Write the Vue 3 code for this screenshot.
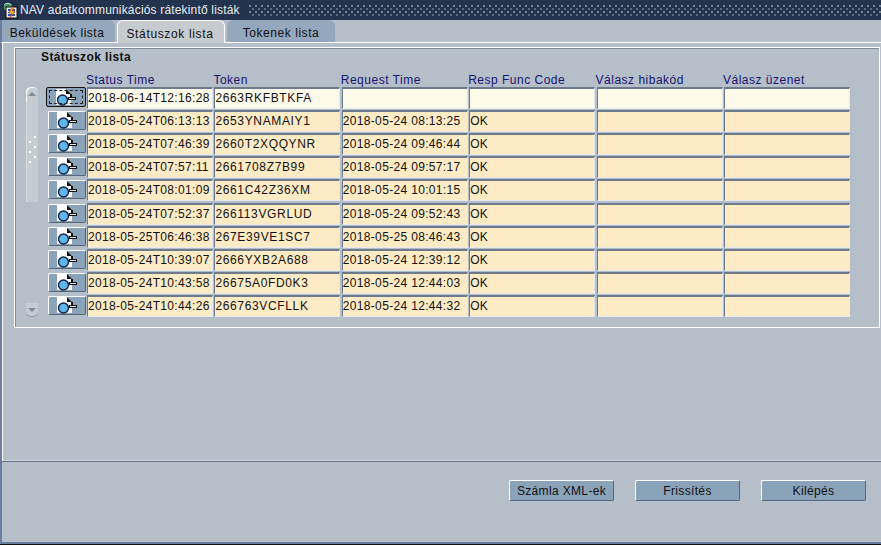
<script setup>
const rows = [
  ['2018-06-14T12:16:28', '2663RKFBTKFA', '', ''],
  ['2018-05-24T06:13:13', '2653YNAMAIY1', '2018-05-24 08:13:25', 'OK'],
  ['2018-05-24T07:46:39', '2660T2XQQYNR', '2018-05-24 09:46:44', 'OK'],
  ['2018-05-24T07:57:11', '2661708Z7B99', '2018-05-24 09:57:17', 'OK'],
  ['2018-05-24T08:01:09', '2661C42Z36XM', '2018-05-24 10:01:15', 'OK'],
  ['2018-05-24T07:52:37', '266113VGRLUD', '2018-05-24 09:52:43', 'OK'],
  ['2018-05-25T06:46:38', '267E39VE1SC7', '2018-05-25 08:46:43', 'OK'],
  ['2018-05-24T10:39:07', '2666YXB2A688', '2018-05-24 12:39:12', 'OK'],
  ['2018-05-24T10:43:58', '26675A0FD0K3', '2018-05-24 12:44:03', 'OK'],
  ['2018-05-24T10:44:26', '266763VCFLLK', '2018-05-24 12:44:32', 'OK'],
]
const heads = ['Status Time', 'Token', 'Request Time', 'Resp Func Code', 'Válasz hibakód', 'Válasz üzenet']
</script>

<template>
  <div class="win">
    <div class="title">
      <svg class="logo" width="16" height="19" viewBox="0 0 16 19">
        <circle cx="6" cy="6" r="5" fill="#3f8f6a" stroke="#12203a" />
        <path d="M2 4c2-2 5-2 7 0M3 8c2 1 4 0 5-2" fill="none" stroke="#d8e8f0" />
        <rect x="4" y="6" width="11" height="11" fill="#f2efe2" stroke="#111" />
        <rect x="6" y="8" width="7" height="2" fill="#2a4fb0" />
        <rect x="6" y="11" width="7" height="1" fill="#2a4fb0" />
        <rect x="6" y="13" width="7" height="2" fill="#2a4fb0" />
        <path d="M10 6l-3 6h3l-2 5 5-7h-3l2-4z" fill="#f0d020" stroke="#c02020" stroke-width="0.6" />
      </svg>
      <span class="title-text">NAV adatkommunikációs rátekintő listák</span>
      <div class="dots"></div>
    </div>
    <div class="tabs">
      <div class="tab first">Beküldések lista</div>
      <div class="tab active">Státuszok lista</div>
      <div class="tab last">Tokenek lista</div>
    </div>
    <div class="panel">
      <div class="frame">
        <div class="frame-title">Státuszok lista</div>
        <div class="heads">
          <span v-for="h in heads" :key="h" class="head">{{ h }}</span>
        </div>
        <div class="body">
          <div class="scroll">
            <div class="arrow up"></div>
            <div class="track"><div class="grip"><div class="grip-dots"></div></div></div>
            <div class="arrow down"></div>
          </div>
          <div class="rows">
            <div v-for="(r, i) in rows" :key="r[1]" class="row" :class="{ current: i === 0 }">
              <div class="ibtn">
                <svg width="24" height="17" viewBox="0 0 24 17">
                  <path d="M2 0h10l5 5v11H2z" fill="#fff" />
                  <path d="M12 0h5v5z" fill="#8ba3b8" />
                  <path d="M12 0v5h5z" fill="#111" />
                  <path d="M17 5v4" stroke="#111" stroke-width="2" fill="none" />
                  <rect x="14.500" y="8.500" width="7" height="2" fill="#dfe6ec" stroke="#111" />
                  <circle cx="8.500" cy="11" r="5" fill="#5fb4e8" stroke="#12204a" stroke-width="1.400" />
                </svg>
              </div>
              <div class="cell c-time">{{ r[0] }}</div>
              <div class="cell c-token">{{ r[1] }}</div>
              <div class="cell c-time">{{ r[2] }}</div>
              <div class="cell c-time">{{ r[3] }}</div>
              <div class="cell"></div>
              <div class="cell"></div>
            </div>
          </div>
        </div>
      </div>
    </div>
    <div class="foot">
      <div class="btn">Számla XML-ek</div>
      <div class="btn">Frissítés</div>
      <div class="btn">Kilépés</div>
    </div>
    <div class="base"></div>
  </div>
</template>

<style scoped>
.win {
  width: 881px;
  height: 545px;
  display: flex;
  flex-direction: column;
  background: #b5bfca;
  font-family: "Liberation Sans", Arial, sans-serif;
  font-size: 12px;
  color: #111;
  overflow: hidden;
}
.title {
  height: 20px;
  background: #23324d;
  display: flex;
  align-items: center;
  color: #e8ecf2;
  font-size: 12px;
  flex: none;
}
.logo { margin-left: 2px; margin-right: 2px; flex: none; }
.title-text { letter-spacing: 0.17px; white-space: nowrap; }
.dots {
  flex: 1;
  height: 12px;
  margin-left: 9px;
  background-image:
    radial-gradient(circle at 1px 1px, #76849a 1px, transparent 1px),
    radial-gradient(circle at 1px 1px, #5a697f 1px, transparent 1px);
  background-size: 6px 6px, 6px 6px;
  background-position: 0 1px, 3px 4px;
}
.tabs {
  height: 23px;
  display: flex;
  align-items: flex-end;
  flex: none;
  border-left: 2px solid #6a7d9e;
  border-bottom: 1px solid #fff;
  box-sizing: border-box;
}
.tab {
  height: 22px;
  display: flex;
  align-items: center;
  justify-content: center;
  box-sizing: border-box;
  padding-top: 3px;
  font-size: 12px;
  background: #94a7bd;
}
.tab.first {
  width: 113px;
  border-top-right-radius: 6px;
  padding-right: 3px;
  letter-spacing: 0.5px;
}
.tab.active {
  width: 108px;
  margin-left: 2px;
  background: #c6cbd0;
  border: 1px solid #fff;
  border-bottom: 0;
  border-radius: 6px 6px 0 0;
  height: 23px;
  margin-bottom: -1px;
  padding-right: 2px;
  letter-spacing: 0.65px;
}
.tab.last {
  width: 108px;
  margin-left: 2px;
  border-radius: 6px 6px 0 0;
  letter-spacing: 0.55px;
}
.panel {
  height: 419px;
  box-sizing: border-box;
  flex: none;
  border-left: 2px solid #6a7d9e;
  border-bottom: 1px solid #66738a;
  padding: 4px 1px 0 12px;
  box-shadow: inset 1px 0 0 #fff, inset 0 -1px 0 #cfd5dc;
}
.frame {
  height: 281px;
  box-sizing: border-box;
  border: 1px solid #fff;
  box-shadow: inset 1px 1px 0 #7d8a9b;
  padding-left: 26px;
}
.frame-title {
  height: 17px;
  font-weight: 700;
  font-size: 12px;
  line-height: 15px;
  box-sizing: border-box;
  padding-top: 2px;
  letter-spacing: 0.4px;
}
.heads {
  display: grid;
  grid-template-columns: repeat(6, 127.4px);
  margin-left: 45px;
  margin-top: 8px;
  height: 15px;
  color: #15156e;
  letter-spacing: 0.5px;
  line-height: 14px;
}
.head { white-space: nowrap; }
.body { display: flex; margin-top: -1px; }
.scroll {
  width: 12px;
  margin-left: -15px;
  margin-right: 8px;
  display: flex;
  flex-direction: column;
  height: 230px;
}
.arrow {
  width: 12px;
  height: 14px;
  background: #c4ccd4;
  position: relative;
  flex: none;
  box-sizing: border-box;
}
.arrow.up { border-radius: 5px 5px 0 0; box-shadow: inset 1px 1px 0 #fff; }
.arrow.down { border-radius: 0 0 5px 5px; box-shadow: inset 0 -1px 0 #8e99a6; margin-top: 1px; }
.arrow::after {
  content: "";
  position: absolute;
  left: 2px;
  border-left: 4px solid transparent;
  border-right: 4px solid transparent;
}
.arrow.up::after { top: 5px; border-bottom: 4px solid #7d8a9b; }
.arrow.down::after { top: 5px; border-top: 4px solid #7d8a9b; }
.track { flex: 1; display: flex; flex-direction: column; }
.grip {
  height: 101px;
  background-color: #c4ccd4;
  box-shadow: inset 1px 0 0 #d8dde3;
  padding-top: 35px;
  box-sizing: border-box;
}
.grip-dots {
  height: 28px;
  margin-left: 2px;
  background-image:
    radial-gradient(circle at 1px 1px, #fff 1px, transparent 1.2px),
    radial-gradient(circle at 1px 1px, #fff 1px, transparent 1.2px);
  background-size: 10px 10px, 10px 10px;
  background-position: 1px 5px, 6px 0;
}
.rows { display: flex; flex-direction: column; }
.row { display: flex; height: 23.11px; align-items: flex-start; }
.ibtn {
  width: 38px;
  height: 19px;
  margin: 1px 1px 0 2px;
  background: #8ba3b8;
  border-top: 1px solid #fff;
  border-left: 1px solid #fff;
  border-right: 1px solid #55667a;
  border-bottom: 1px solid #55667a;
  display: flex;
  align-items: center;
  justify-content: center;
  flex: none;
  box-sizing: border-box;
  border-radius: 2px;
  overflow: hidden;
}
.row.current .ibtn {
  width: 40px;
  height: 20px;
  margin: 0 1px 0 0;
  border: 1px solid #111;
  outline: 1px dashed #222;
  outline-offset: -4px;
}
.cell {
  width: 126px;
  height: 22px;
  margin-right: 1.4px;
  box-sizing: border-box;
  background: #fcebc4;
  border-top: 2px solid #6c7a8c;
  border-left: 1px solid #6c7a8c;
  border-right: 1px solid #e6eaee;
  border-bottom: 1px solid #e6eaee;
  line-height: 19px;
  white-space: nowrap;
  overflow: hidden;
  flex: none;
}
.c-time { letter-spacing: 0.33px; }
.c-token { letter-spacing: 0.65px; }
.row.current .cell { background: #fefae9; }
.foot {
  flex: 1;
  display: flex;
  justify-content: flex-end;
  gap: 21px;
  padding: 18px 15px 0 0;
  box-sizing: border-box;
  border-left: 2px solid #6a7d9e;
}
.btn {
  width: 105px;
  height: 21px;
  box-sizing: border-box;
  background: #8ba3b8;
  border-top: 1px solid #fff;
  border-left: 1px solid #fff;
  border-right: 1px solid #55667a;
  border-bottom: 1px solid #55667a;
  border-radius: 2px;
  display: flex;
  align-items: center;
  justify-content: center;
  letter-spacing: 0.35px;
}
.base { height: 3px; box-sizing: border-box; flex: none; background: #6a7d9e; border-bottom: 1px solid #111; }
</style>
